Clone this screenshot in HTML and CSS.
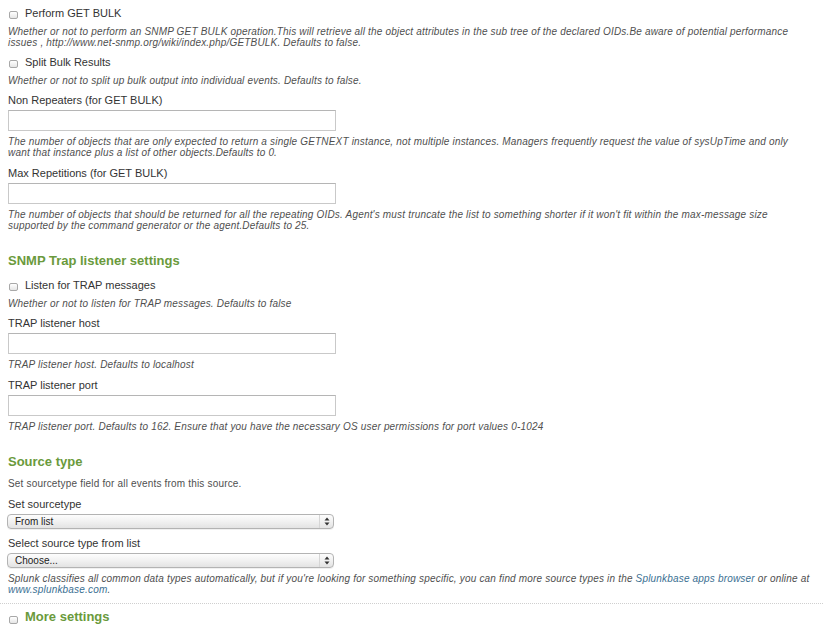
FILE: index.html
```html
<!DOCTYPE html>
<html>
<head>
<meta charset="utf-8">
<link rel="stylesheet" href="styles.css">
</head>
<body>
<div class="form">
  <div class="check-row first"><span class="checkbox"></span><span class="check-label">Perform GET BULK</span></div>
  <p class="help after-check">Whether or not to perform an SNMP GET BULK operation.This will retrieve all the object attributes in the sub tree of the declared OIDs.Be aware of potential performance<br>issues , http://www.net-snmp.org/wiki/index.php/GETBULK. Defaults to false.</p>

  <div class="check-row"><span class="checkbox"></span><span class="check-label">Split Bulk Results</span></div>
  <p class="help after-check">Whether or not to split up bulk output into individual events. Defaults to false.</p>

  <div class="field-label">Non Repeaters (for GET BULK)</div>
  <div class="text-input"></div>
  <p class="help">The number of objects that are only expected to return a single GETNEXT instance, not multiple instances. Managers frequently request the value of sysUpTime and only<br>want that instance plus a list of other objects.Defaults to 0.</p>

  <div class="field-label">Max Repetitions (for GET BULK)</div>
  <div class="text-input"></div>
  <p class="help">The number of objects that should be returned for all the repeating OIDs. Agent's must truncate the list to something shorter if it won't fit within the max-message size<br>supported by the command generator or the agent.Defaults to 25.</p>

  <h2 class="section-title">SNMP Trap listener settings</h2>
  <div class="check-row after-title"><span class="checkbox"></span><span class="check-label">Listen for TRAP messages</span></div>
  <p class="help after-check">Whether or not to listen for TRAP messages. Defaults to false</p>

  <div class="field-label">TRAP listener host</div>
  <div class="text-input"></div>
  <p class="help">TRAP listener host. Defaults to localhost</p>

  <div class="field-label">TRAP listener port</div>
  <div class="text-input"></div>
  <p class="help">TRAP listener port. Defaults to 162. Ensure that you have the necessary OS user permissions for port values 0-1024</p>

  <h2 class="section-title">Source type</h2>
  <p class="intro">Set sourcetype field for all events from this source.</p>

  <div class="field-label">Set sourcetype</div>
  <div class="select"><span class="select-text">From list</span><span class="select-arrows"><svg width="6" height="9" viewBox="0 0 6 9"><path d="M3 0.5 L5.5 3.5 H0.5 Z M3 8.5 L5.5 5.5 H0.5 Z" fill="#333"/></svg></span></div>

  <div class="field-label">Select source type from list</div>
  <div class="select"><span class="select-text">Choose...</span><span class="select-arrows"><svg width="6" height="9" viewBox="0 0 6 9"><path d="M3 0.5 L5.5 3.5 H0.5 Z M3 8.5 L5.5 5.5 H0.5 Z" fill="#333"/></svg></span></div>
  <p class="help">Splunk classifies all common data types automatically, but if you're looking for something specific, you can find more source types in the <a class="link" href="#">Splunkbase apps browser</a> or online at<br><a class="link" href="#">www.splunkbase.com</a>.</p>
</div>
<div class="divider"></div>
<div class="more-row"><span class="checkbox"></span><span class="more-title">More settings</span></div>
</body>
</html>
```
FILE: styles.css
```css
html, body {
  margin: 0;
  padding: 0;
  background: #ffffff;
}
body {
  font-family: "Liberation Sans", Arial, Helvetica, sans-serif;
  color: #333333;
}
.form {
  padding: 6px 8px 0 8px;
}
.check-row {
  display: flex;
  align-items: center;
  height: 14px;
  margin-top: 7px;
}
.check-row.first {
  margin-top: 0;
}
.check-row.after-title {
  margin-top: 9px;
}
.checkbox {
  display: inline-block;
  box-sizing: border-box;
  width: 9px;
  height: 8px;
  margin: 3px 7px 0 1px;
  border: 1px solid #a8a8a8;
  border-radius: 2px;
  background: linear-gradient(#ffffff, #e6e6e6);
  flex: none;
}
.check-label {
  font-size: 11px;
  line-height: 14px;
  color: #333;
}
.help {
  margin: 5px 0 0 0;
  font-size: 10px;
  letter-spacing: 0.18px;
  line-height: 11px;
  font-style: italic;
  color: #4f4f4f;
}
.help.after-check {
  margin-top: 6px;
}
.field-label {
  font-size: 11px;
  line-height: 14px;
  margin-top: 8px;
  color: #333;
}
.help.after-check + .field-label {
  margin-top: 7px;
}
.text-input {
  box-sizing: border-box;
  width: 328px;
  height: 21px;
  margin-top: 3px;
  border: 1px solid #c9c9c9;
  border-top-color: #b5b5b5;
  background: #fff;
}
.section-title {
  margin: 22px 0 0 0;
  font-size: 13px;
  line-height: 16px;
  font-weight: bold;
  color: #6a9a3c;
}
.intro {
  margin: 8px 0 0 0;
  font-size: 10px;
  letter-spacing: 0.18px;
  line-height: 11px;
  color: #4f4f4f;
}
.intro + .field-label {
  margin-top: 8px;
}
.select {
  box-sizing: border-box;
  position: relative;
  display: flex;
  align-items: center;
  width: 327px;
  height: 15px;
  margin: 3px 0 0 -1px;
  border: 1px solid #b3b3b3;
  border-radius: 4px;
  background: linear-gradient(#fdfdfd, #f1f1f1 50%, #e3e3e3);
  box-shadow: 0 1px 0 rgba(0,0,0,0.06);
}
.select + .field-label {
  margin-top: 7px;
}
.select-text {
  padding-left: 7px;
  font-size: 10px;
  line-height: 13px;
  color: #222;
  flex: 1;
}
.select-arrows {
  display: flex;
  align-items: center;
  justify-content: center;
  width: 13px;
  height: 13px;
  border-left: 1px solid #d6d6d6;
}
.select-arrows svg {
  display: block;
}
.link {
  color: #3a6f92;
  text-decoration: none;
}
.divider {
  margin-top: 8px;
  border-top: 1px dotted #cfcfcf;
  height: 0;
}
.more-row {
  display: flex;
  align-items: center;
  height: 16px;
  margin-top: 5px;
  padding-left: 8px;
}
.more-row .checkbox {
  margin-top: 6px;
}
.more-title {
  font-size: 13px;
  line-height: 16px;
  font-weight: bold;
  color: #6a9a3c;
}
```
